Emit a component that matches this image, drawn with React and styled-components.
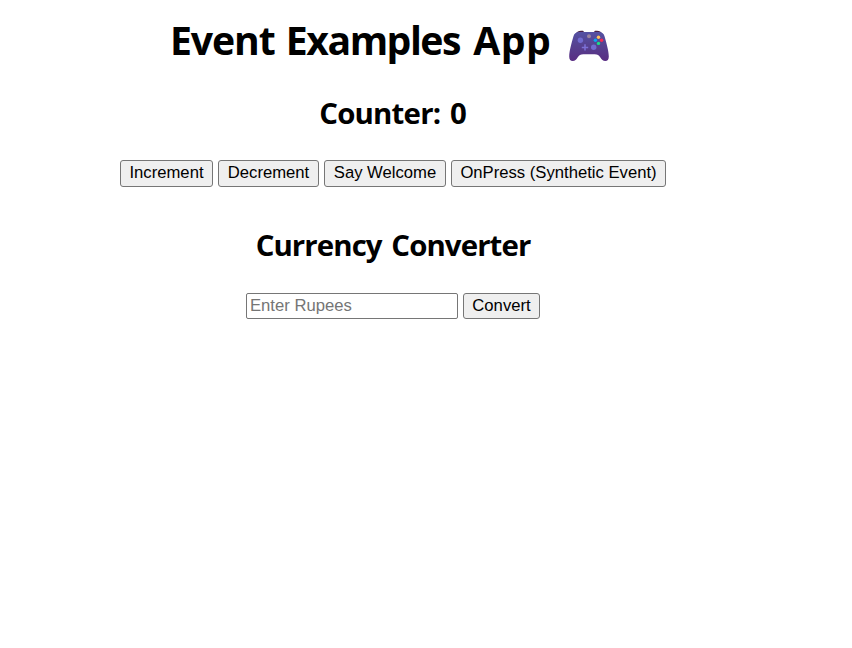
import React, { useState } from "react";
import styled, { createGlobalStyle } from "styled-components";

const GlobalStyle = createGlobalStyle`
  body { margin: 0; background: #fff; color: #000; }
  * { box-sizing: border-box; }
`;

const Page = styled.main`
  width: 786px;
  display: flex;
  flex-direction: column;
  align-items: center;
  font-family: "Open Sans", "Noto Sans", sans-serif;
`;

const Title = styled.h1`
  display: flex;
  align-items: flex-start;
  margin: 14px 0 0 -6px;
  width: 446px;
  height: 54px;
  font-size: 39.2px;
  line-height: 52px;
  font-weight: 700;
  white-space: nowrap;
`;

const TitleText = styled.span`
  width: 402px;
  padding-left: 3px;
  flex: none;
`;

const Word = styled.span`
  letter-spacing: ${(p) => p.$tracking};
  margin-right: ${(p) => p.$gap || "0"};
`;

const Gamepad = styled.svg`
  width: 40px;
  height: 32px;
  margin-top: 15.5px;
  flex: none;
`;

const Heading = styled.h2`
  margin: ${(p) => p.$top} 0 0;
  height: 40px;
  font-size: 29.4px;
  line-height: 38px;
  font-weight: 700;
  white-space: nowrap;
`;

const Row = styled.div`
  display: flex;
  gap: 5px;
  margin-top: ${(p) => p.$top};
`;

const Button = styled.button`
  width: ${(p) => p.$width};
  height: ${(p) => p.$height || "27px"};
  padding: ${(p) => (p.$height ? "0 0 1px" : "0 0 2px")};
  border: 1px solid #767676;
  border-radius: 3px;
  background: #efefef;
  color: #000;
  font: 16.667px/19px "Liberation Sans", Arial, sans-serif;
  white-space: nowrap;
`;

const Field = styled.input`
  width: 212px;
  height: 26px;
  padding: 0 3px 1px;
  border: 1px solid #767676;
  border-radius: 2px;
  background: #fff;
  font: 16.667px/19px "Liberation Sans", Arial, sans-serif;
  &::placeholder { color: #757575; opacity: 1; }
`;

function Controller() {
  return (
    <Gamepad viewBox="0 0 40 32" role="img" aria-label="Game controller">
      <defs>
        <linearGradient id="shell" x1="0" y1="0" x2="0" y2="1">
          <stop offset="0" stopColor="#5551a3" />
          <stop offset="0.5" stopColor="#56408f" />
          <stop offset="1" stopColor="#592d83" />
        </linearGradient>
      </defs>
      <path d="M7 4C8 .8 10.500.4 14 .8L16 3zM33 4C32 .8 29.500.4 26 .8L24 3z" fill="#4a2146" />
      <path
        d="M10 2H30C33.200 2 34.800 3.600 35.600 6.500C37.400 13 39.800 21 39.800 26.500C39.800 29.500 38.500 31 36.300 31C34 31 32.700 29.500 31.400 27.500C29.800 25.200 28.600 24.200 25.700 24.200H14.300C11.400 24.200 10.200 25.200 8.600 27.500C7.300 29.500 6 31 3.700 31C1.500 31 .2 29.500.2 26.500C.2 21 2.600 13 4.400 6.500C5.200 3.600 6.800 2 10 2Z"
        fill="url(#shell)"
      />
      <circle cx="11.400" cy="10.300" r="2.700" fill="#716bd0" />
      <circle cx="24.700" cy="17.300" r="2.700" fill="#716bd0" />
      <path d="M16 14.200V20.600M12.800 17.400H19.200" stroke="#7c70d6" strokeWidth="1.500" />
      <circle cx="20" cy="6.300" r="2" fill="#9b849f" />
      <circle cx="29.500" cy="7.200" r="1.700" fill="#ffc45b" />
      <circle cx="26.400" cy="10.300" r="1.700" fill="#08a7ed" />
      <circle cx="32.600" cy="10.300" r="1.700" fill="#f62b54" />
      <circle cx="29.500" cy="13.400" r="1.700" fill="#19df87" />
    </Gamepad>
  );
}

export default function App() {
  const [count, setCount] = useState(0);
  const [rupees, setRupees] = useState("");

  return (
    <>
      <GlobalStyle />
      <Page>
        <Title>
          <TitleText>
            <Word $tracking="-1.1px" $gap="1px">Event</Word>{" "}
            <Word $tracking="-1.5px" $gap="3px">Examples</Word>{" "}
            <Word $tracking="0.5px">App</Word>
          </TitleText>
          <Controller />
        </Title>
        <Heading $top="26px">
          <Word $tracking="-0.8px" $gap="2px">Counter:</Word> {count}
        </Heading>
        <Row $top="26px">
          <Button $width="93px" onClick={() => setCount(count + 1)}>Increment</Button>
          <Button $width="101px" onClick={() => setCount(count - 1)}>Decrement</Button>
          <Button $width="122px">Say Welcome</Button>
          <Button $width="215px">OnPress (Synthetic Event)</Button>
        </Row>
        <Heading $top="39px">
          <Word $tracking="-0.9px" $gap="2px">Currency</Word>{" "}
          <Word $tracking="-0.9px">Converter</Word>
        </Heading>
        <Row $top="27px">
          <Field placeholder="Enter Rupees" value={rupees} onChange={(e) => setRupees(e.target.value)} />
          <Button $width="77px" $height="26px">Convert</Button>
        </Row>
      </Page>
    </>
  );
}
